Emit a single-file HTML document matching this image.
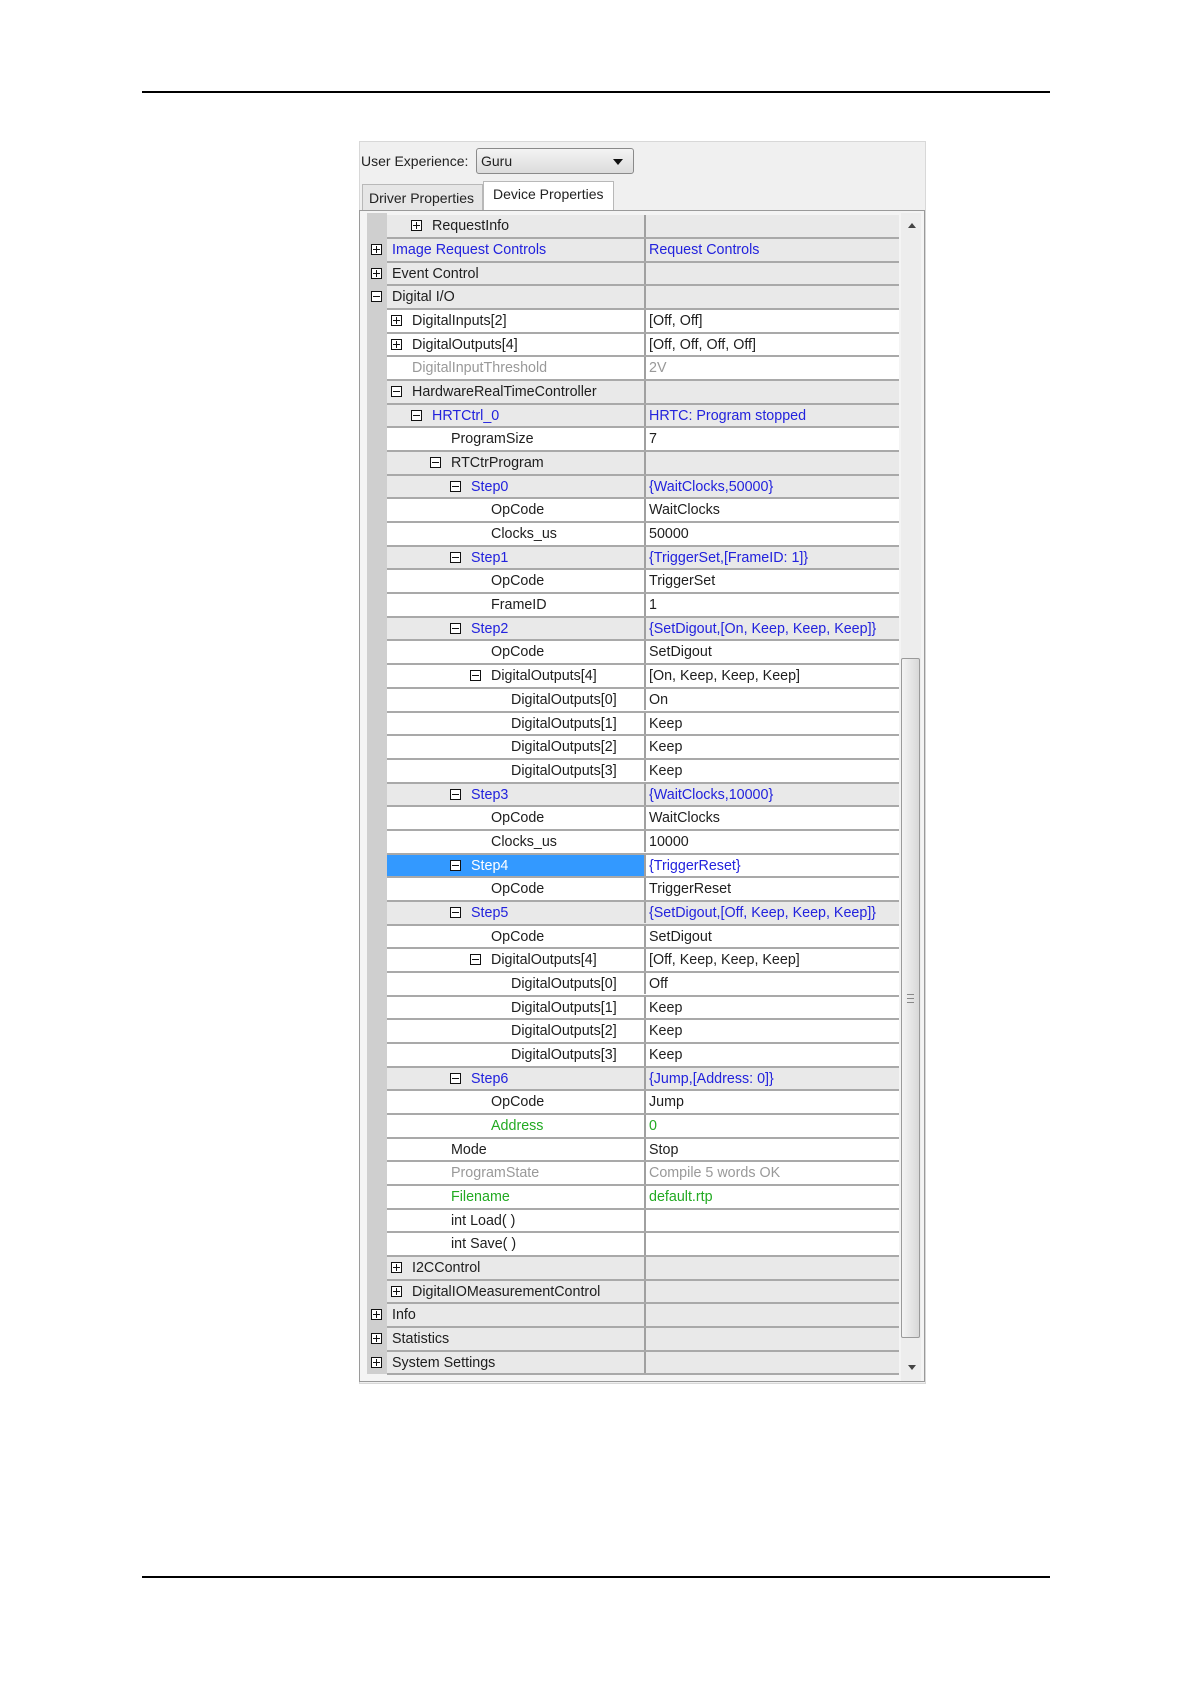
<!DOCTYPE html>
<html><head><meta charset="utf-8">
<style>
body{margin:0;width:1191px;height:1684px;background:#fff;position:relative;font-family:"Liberation Sans",sans-serif;overflow:hidden}
.hr{position:absolute;left:142px;width:908px;height:2px;background:#000}
#panel{position:absolute;left:359px;top:141px;width:567px;height:1243px;background:#f0f0f0;border:1px solid #d8d8d8;box-sizing:border-box}
.ux{position:absolute;left:361px;top:153px;font-size:14px;color:#222}
.combo{position:absolute;left:476px;top:148px;width:158px;height:26px;box-sizing:border-box;border:1px solid #8a8a8a;border-radius:3px;background:linear-gradient(#f4f4f4,#dcdcdc);font-size:14px;color:#222;padding:4px 0 0 4px}
.combo:after{content:"";position:absolute;right:10px;top:10px;border-left:5px solid transparent;border-right:5px solid transparent;border-top:6px solid #111}
.tab{position:absolute;font-size:14px;color:#222;box-sizing:border-box;border:1px solid #b8b8b8;border-bottom:none}
#grid{position:absolute;left:359px;top:210px;width:566px;height:1172px;border:1px solid #9a9a9a;box-sizing:border-box;background:#f4f4f4}
#margin{position:absolute;left:367px;top:213px;width:20px;height:1161px;background:#cfcfcf}
#rows{position:absolute;left:387px;top:215.4px;width:512px}
.r{position:relative;height:23.68px;box-sizing:border-box;border-bottom:2px solid #a9a9a9;background:#e9e9e9;font-size:14.3px;color:#1e1e1e}
.r.w{background:#fff}
.l,.v{position:absolute;top:0;height:21.6px;line-height:22px;white-space:nowrap;box-sizing:border-box}
.l{left:0;width:259px;border-right:2px solid #a0a0a0}
.v{left:259px;right:0;padding-left:3px}
.sel .l{background:#3399ff;color:#fff}
.sel .v{background:#fff}
.b{color:#2222dd}.g{color:#999}.gr{color:#22aa22}
.i{position:absolute;top:5px;width:11px;height:11px;box-sizing:border-box;border:1px solid #111;background:#fff}
.i:before{content:"";position:absolute;left:1px;top:4px;width:7px;height:1px;background:#111}
.p:after{content:"";position:absolute;left:4px;top:1px;width:1px;height:7px;background:#111}
#sb{position:absolute;left:901px;top:213px;width:20px;height:1168px;background:#ededed}
#thumb{position:absolute;left:901px;top:658px;width:19px;height:680px;box-sizing:border-box;border:1px solid #9a9a9a;border-radius:2px;background:linear-gradient(90deg,#f4f4f4,#d8d8d8)}
</style></head><body>
<div class="hr" style="top:91px"></div>
<div class="hr" style="top:1576px"></div>
<div id="panel"></div>
<div class="ux">User Experience:</div>
<div class="combo">Guru</div>
<div class="tab" style="left:362px;top:184px;width:121px;height:26px;padding:5px 0 0 6px;background:#e6e6e6">Driver Properties</div>
<div class="tab" style="left:483px;top:181px;width:131px;height:30px;padding:4px 0 0 9px;background:#fff">Device Properties</div>
<div id="grid"></div>
<div id="margin"></div>
<div id="sb"></div>
<div style="position:absolute;left:908px;top:223px;border-left:4px solid transparent;border-right:4px solid transparent;border-bottom:5px solid #444"></div>
<div style="position:absolute;left:908px;top:1365px;border-left:4px solid transparent;border-right:4px solid transparent;border-top:5px solid #444"></div>
<div id="thumb"></div>
<div style="position:absolute;left:907px;top:994px;width:7px;height:7px;border-top:1px solid #888;border-bottom:1px solid #888"><div style="margin-top:3px;height:1px;background:#888"></div></div>
<div id="rows">
<div class="r"><div class="l" style="padding-left:45px"><span class="i p" style="left:24px"></span>RequestInfo</div><div class="v"></div></div>
<div class="r"><div class="l b" style="padding-left:5px"><span class="i p" style="left:-16px"></span>Image Request Controls</div><div class="v b">Request Controls</div></div>
<div class="r"><div class="l" style="padding-left:5px"><span class="i p" style="left:-16px"></span>Event Control</div><div class="v"></div></div>
<div class="r"><div class="l" style="padding-left:5px"><span class="i" style="left:-16px"></span>Digital I/O</div><div class="v"></div></div>
<div class="r w"><div class="l" style="padding-left:25px"><span class="i p" style="left:4px"></span>DigitalInputs[2]</div><div class="v">[Off, Off]</div></div>
<div class="r w"><div class="l" style="padding-left:25px"><span class="i p" style="left:4px"></span>DigitalOutputs[4]</div><div class="v">[Off, Off, Off, Off]</div></div>
<div class="r w"><div class="l g" style="padding-left:25px">DigitalInputThreshold</div><div class="v g">2V</div></div>
<div class="r"><div class="l" style="padding-left:25px"><span class="i" style="left:4px"></span>HardwareRealTimeController</div><div class="v"></div></div>
<div class="r"><div class="l b" style="padding-left:45px"><span class="i" style="left:24px"></span>HRTCtrl_0</div><div class="v b">HRTC: Program stopped</div></div>
<div class="r w"><div class="l" style="padding-left:64px">ProgramSize</div><div class="v">7</div></div>
<div class="r"><div class="l" style="padding-left:64px"><span class="i" style="left:43px"></span>RTCtrProgram</div><div class="v"></div></div>
<div class="r"><div class="l b" style="padding-left:84px"><span class="i" style="left:63px"></span>Step0</div><div class="v b">{WaitClocks,50000}</div></div>
<div class="r w"><div class="l" style="padding-left:104px">OpCode</div><div class="v">WaitClocks</div></div>
<div class="r w"><div class="l" style="padding-left:104px">Clocks_us</div><div class="v">50000</div></div>
<div class="r"><div class="l b" style="padding-left:84px"><span class="i" style="left:63px"></span>Step1</div><div class="v b">{TriggerSet,[FrameID: 1]}</div></div>
<div class="r w"><div class="l" style="padding-left:104px">OpCode</div><div class="v">TriggerSet</div></div>
<div class="r w"><div class="l" style="padding-left:104px">FrameID</div><div class="v">1</div></div>
<div class="r"><div class="l b" style="padding-left:84px"><span class="i" style="left:63px"></span>Step2</div><div class="v b">{SetDigout,[On, Keep, Keep, Keep]}</div></div>
<div class="r w"><div class="l" style="padding-left:104px">OpCode</div><div class="v">SetDigout</div></div>
<div class="r w"><div class="l" style="padding-left:104px"><span class="i" style="left:83px"></span>DigitalOutputs[4]</div><div class="v">[On, Keep, Keep, Keep]</div></div>
<div class="r w"><div class="l" style="padding-left:124px">DigitalOutputs[0]</div><div class="v">On</div></div>
<div class="r w"><div class="l" style="padding-left:124px">DigitalOutputs[1]</div><div class="v">Keep</div></div>
<div class="r w"><div class="l" style="padding-left:124px">DigitalOutputs[2]</div><div class="v">Keep</div></div>
<div class="r w"><div class="l" style="padding-left:124px">DigitalOutputs[3]</div><div class="v">Keep</div></div>
<div class="r"><div class="l b" style="padding-left:84px"><span class="i" style="left:63px"></span>Step3</div><div class="v b">{WaitClocks,10000}</div></div>
<div class="r w"><div class="l" style="padding-left:104px">OpCode</div><div class="v">WaitClocks</div></div>
<div class="r w"><div class="l" style="padding-left:104px">Clocks_us</div><div class="v">10000</div></div>
<div class="r sel"><div class="l" style="padding-left:84px"><span class="i" style="left:63px"></span>Step4</div><div class="v b">{TriggerReset}</div></div>
<div class="r w"><div class="l" style="padding-left:104px">OpCode</div><div class="v">TriggerReset</div></div>
<div class="r"><div class="l b" style="padding-left:84px"><span class="i" style="left:63px"></span>Step5</div><div class="v b">{SetDigout,[Off, Keep, Keep, Keep]}</div></div>
<div class="r w"><div class="l" style="padding-left:104px">OpCode</div><div class="v">SetDigout</div></div>
<div class="r w"><div class="l" style="padding-left:104px"><span class="i" style="left:83px"></span>DigitalOutputs[4]</div><div class="v">[Off, Keep, Keep, Keep]</div></div>
<div class="r w"><div class="l" style="padding-left:124px">DigitalOutputs[0]</div><div class="v">Off</div></div>
<div class="r w"><div class="l" style="padding-left:124px">DigitalOutputs[1]</div><div class="v">Keep</div></div>
<div class="r w"><div class="l" style="padding-left:124px">DigitalOutputs[2]</div><div class="v">Keep</div></div>
<div class="r w"><div class="l" style="padding-left:124px">DigitalOutputs[3]</div><div class="v">Keep</div></div>
<div class="r"><div class="l b" style="padding-left:84px"><span class="i" style="left:63px"></span>Step6</div><div class="v b">{Jump,[Address: 0]}</div></div>
<div class="r w"><div class="l" style="padding-left:104px">OpCode</div><div class="v">Jump</div></div>
<div class="r w"><div class="l gr" style="padding-left:104px">Address</div><div class="v gr">0</div></div>
<div class="r w"><div class="l" style="padding-left:64px">Mode</div><div class="v">Stop</div></div>
<div class="r w"><div class="l g" style="padding-left:64px">ProgramState</div><div class="v g">Compile 5 words OK</div></div>
<div class="r w"><div class="l gr" style="padding-left:64px">Filename</div><div class="v gr">default.rtp</div></div>
<div class="r w"><div class="l" style="padding-left:64px">int Load( )</div><div class="v"></div></div>
<div class="r w"><div class="l" style="padding-left:64px">int Save( )</div><div class="v"></div></div>
<div class="r"><div class="l" style="padding-left:25px"><span class="i p" style="left:4px"></span>I2CControl</div><div class="v"></div></div>
<div class="r"><div class="l" style="padding-left:25px"><span class="i p" style="left:4px"></span>DigitalIOMeasurementControl</div><div class="v"></div></div>
<div class="r"><div class="l" style="padding-left:5px"><span class="i p" style="left:-16px"></span>Info</div><div class="v"></div></div>
<div class="r"><div class="l" style="padding-left:5px"><span class="i p" style="left:-16px"></span>Statistics</div><div class="v"></div></div>
<div class="r"><div class="l" style="padding-left:5px"><span class="i p" style="left:-16px"></span>System Settings</div><div class="v"></div></div>
</div>
</body></html>
